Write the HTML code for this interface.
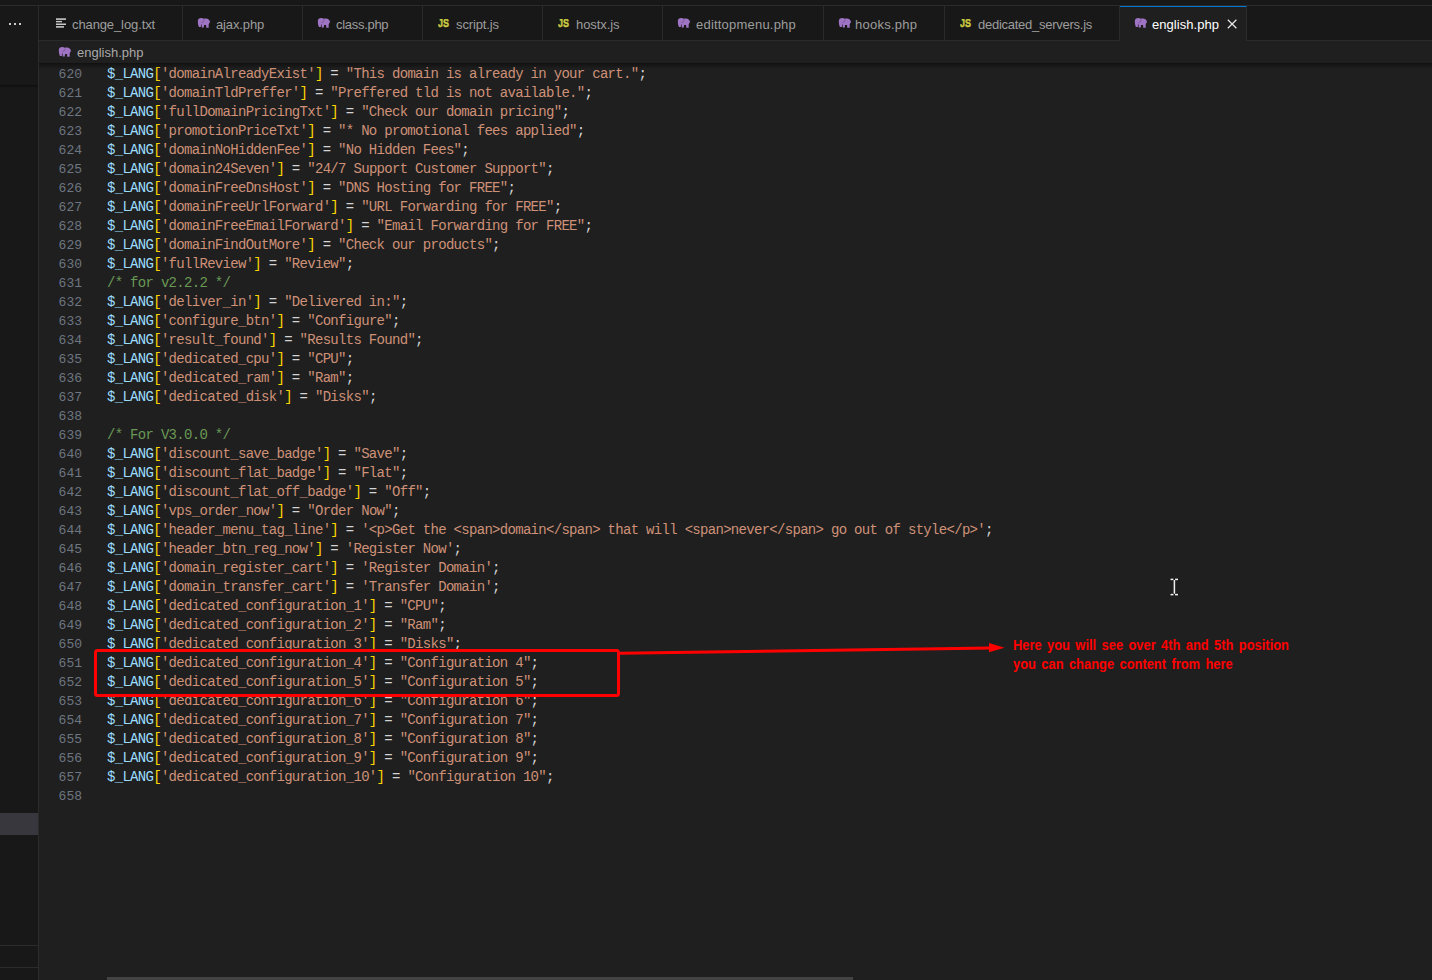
<!DOCTYPE html>
<html><head><meta charset="utf-8">
<style>
*{box-sizing:border-box;margin:0;padding:0}
html,body{width:1432px;height:980px;overflow:hidden;background:#1f1f1f}
body{position:relative;font-family:"Liberation Sans",sans-serif}
#title{position:absolute;left:0;top:0;width:1432px;height:6px;background:#181818;border-bottom:1px solid #2b2b2b}
#side{position:absolute;left:0;top:6px;width:39px;height:974px;background:#181818;border-right:1px solid #2b2b2b}
#side .d{position:absolute;top:17px;width:2px;height:2px;background:#cccccc}
#side .sh{position:absolute;left:0;top:79px;width:38px;height:3px;background:linear-gradient(#0e0e0e,#141414 60%,#181818)}
#side .sel{position:absolute;left:0;top:807px;width:38px;height:22px;background:#37373d}
#side .l1{position:absolute;left:0;top:939px;width:38px;height:1px;background:#2b2b2b}
#side .l2{position:absolute;left:0;top:961px;width:38px;height:1px;background:#2b2b2b}
#tabs{position:absolute;left:39px;top:6px;width:1393px;height:35px;background:#181818;border-bottom:1px solid #2b2b2b}
.tab{position:absolute;top:0;height:35px;border-right:1px solid #2b2b2b;color:#9d9d9d;font-size:13px;white-space:nowrap}
.tab .t{position:absolute;top:10px}
.tab.act{background:#1f1f1f;color:#ffffff;height:35px;border-top:1px solid #0078d4}
.ico{position:absolute}
#crumb{position:absolute;left:39px;top:41px;width:1393px;height:22px;background:#1f1f1f;color:#a9a9a9;font-size:13px}
#shadow{position:absolute;left:39px;top:63px;width:1393px;height:6px;background:linear-gradient(rgba(0,0,0,.45),rgba(0,0,0,0));z-index:5}
.ln{position:absolute;left:40px;width:42px;text-align:right;height:19px;line-height:19px;color:#6e7681;font-family:"Liberation Mono",monospace;font-size:13px;letter-spacing:0px;padding-top:2px;white-space:pre}
.cl{position:absolute;left:107px;height:19px;line-height:19px;color:#d4d4d4;font-family:"Liberation Mono",monospace;font-size:14px;letter-spacing:-0.7px;padding-top:2px;white-space:pre}
.v{color:#9cdcfe}.b{color:#ffd700}.s{color:#ce9178}.o{color:#d4d4d4}.c{color:#6a9955}
#hscroll{position:absolute;left:107px;top:977px;width:746px;height:3px;background:#434343}
#note{position:absolute;left:1013px;top:636px;color:#ff0000;font-weight:bold;font-size:14.5px;line-height:19px;white-space:nowrap;word-spacing:2px;transform:scaleX(0.89);transform-origin:0 0}
</style></head><body>
<div id="title"></div>
<div id="side"><div class="d" style="left:9px"></div><div class="d" style="left:14px"></div><div class="d" style="left:19px"></div><div class="sh"></div><div class="sel"></div><div class="l1"></div><div class="l2"></div></div>
<svg width="0" height="0" style="position:absolute"><defs>
<g id="eleph">
<path fill="#a074c4" d="M0.8,3.2 C0.8,1.2 2.2,0 4.3,0 C5.3,0 6,0.3 6.5,0.8 C7.2,0.6 8,0.6 9,0.6 C11.2,0.6 12.6,2 12.8,3.6 L13.3,4.1 L12.6,4.6 C12.3,5.3 11.9,5.8 11.7,6.2 L11.7,9.7 L9.2,9.7 L9.1,7 L7,7 L6.8,9.6 L4.7,9.6 L4.6,6.6 L3.9,6.6 L3.9,8.9 L1.9,8.9 C1.3,7.5 0.8,5.5 0.8,3.2 Z"/>
<path fill="none" stroke="#6f5190" stroke-width="0.9" d="M7.1,1.6 C7,3.2 6.5,4.2 4.6,4.5"/>
</g>
<g id="js"><text x="0" y="8" font-family="Liberation Sans" font-weight="bold" font-size="11" fill="#cbcb41" stroke="#cbcb41" stroke-width="0.45" textLength="11" lengthAdjust="spacingAndGlyphs">JS</text></g>
</defs></svg>
<div id="tabs">
 <div class="tab" style="left:0;width:144px"><svg class="ico" style="left:17px;top:12px" width="11" height="10"><rect x="0" y="0.3" width="10" height="1.6" fill="#c8c8c8"/><rect x="0" y="2.9" width="6" height="1.4" fill="#c8c8c8"/><rect x="0" y="5.5" width="10" height="1.5" fill="#c8c8c8"/><rect x="0" y="8.1" width="8" height="1.6" fill="#c8c8c8"/></svg><span class="t" style="left:33px;top:11px;letter-spacing:-0.11px">change_log.txt</span></div>
 <div class="tab" style="left:144px;width:120px"><svg class="ico" style="left:14px;top:12px" width="14" height="10"><use href="#eleph"/></svg><span class="t" style="left:33px;top:11px;letter-spacing:-0.13px">ajax.php</span></div>
 <div class="tab" style="left:264px;width:120px"><svg class="ico" style="left:14px;top:12px" width="14" height="10"><use href="#eleph"/></svg><span class="t" style="left:33px;top:11px;letter-spacing:-0.29px">class.php</span></div>
 <div class="tab" style="left:384px;width:120px"><svg class="ico" style="left:15px;top:13px" width="12" height="9"><use href="#js"/></svg><span class="t" style="left:33px;top:11px;letter-spacing:-0.12px">script.js</span></div>
 <div class="tab" style="left:504px;width:120px"><svg class="ico" style="left:15px;top:13px" width="12" height="9"><use href="#js"/></svg><span class="t" style="left:33px;top:11px;letter-spacing:-0.07px">hostx.js</span></div>
 <div class="tab" style="left:624px;width:161px"><svg class="ico" style="left:14px;top:12px" width="14" height="10"><use href="#eleph"/></svg><span class="t" style="left:33px;top:11px;letter-spacing:0.21px">edittopmenu.php</span></div>
 <div class="tab" style="left:785px;width:121px"><svg class="ico" style="left:14px;top:12px" width="14" height="10"><use href="#eleph"/></svg><span class="t" style="left:31px;top:11px;letter-spacing:0.25px">hooks.php</span></div>
 <div class="tab" style="left:906px;width:175px"><svg class="ico" style="left:15px;top:13px" width="12" height="9"><use href="#js"/></svg><span class="t" style="left:33px;top:11px;letter-spacing:-0.26px">dedicated_servers.js</span></div>
 <div class="tab act" style="left:1081px;width:127px"><svg class="ico" style="left:14px;top:11px" width="14" height="10"><use href="#eleph"/></svg><span class="t" style="left:32px;top:10px;letter-spacing:0.06px">english.php</span><svg class="ico" style="left:107px;top:12px" width="11" height="10"><path d="M0.8,0.8 L9.4,9.2 M9.4,0.8 L0.8,9.2" stroke="#e8e8e8" stroke-width="1.2" fill="none"/></svg></div>
</div>
<div id="crumb"><svg class="ico" style="left:19px;top:6px" width="14" height="10"><use href="#eleph"/></svg><span style="position:absolute;left:38px;top:4px">english.php</span></div>
<div id="shadow"></div>
<div class=ln style="top:63px">620</div><div class=cl style="top:63px"><span class=v>$_LANG</span><span class=b>[</span><span class=s>&#x27;domainAlreadyExist&#x27;</span><span class=b>]</span><span class=o> = </span><span class=s>&quot;This domain is already in your cart.&quot;</span><span class=o>;</span></div>
<div class=ln style="top:82px">621</div><div class=cl style="top:82px"><span class=v>$_LANG</span><span class=b>[</span><span class=s>&#x27;domainTldPreffer&#x27;</span><span class=b>]</span><span class=o> = </span><span class=s>&quot;Preffered tld is not available.&quot;</span><span class=o>;</span></div>
<div class=ln style="top:101px">622</div><div class=cl style="top:101px"><span class=v>$_LANG</span><span class=b>[</span><span class=s>&#x27;fullDomainPricingTxt&#x27;</span><span class=b>]</span><span class=o> = </span><span class=s>&quot;Check our domain pricing&quot;</span><span class=o>;</span></div>
<div class=ln style="top:120px">623</div><div class=cl style="top:120px"><span class=v>$_LANG</span><span class=b>[</span><span class=s>&#x27;promotionPriceTxt&#x27;</span><span class=b>]</span><span class=o> = </span><span class=s>&quot;* No promotional fees applied&quot;</span><span class=o>;</span></div>
<div class=ln style="top:139px">624</div><div class=cl style="top:139px"><span class=v>$_LANG</span><span class=b>[</span><span class=s>&#x27;domainNoHiddenFee&#x27;</span><span class=b>]</span><span class=o> = </span><span class=s>&quot;No Hidden Fees&quot;</span><span class=o>;</span></div>
<div class=ln style="top:158px">625</div><div class=cl style="top:158px"><span class=v>$_LANG</span><span class=b>[</span><span class=s>&#x27;domain24Seven&#x27;</span><span class=b>]</span><span class=o> = </span><span class=s>&quot;24/7 Support Customer Support&quot;</span><span class=o>;</span></div>
<div class=ln style="top:177px">626</div><div class=cl style="top:177px"><span class=v>$_LANG</span><span class=b>[</span><span class=s>&#x27;domainFreeDnsHost&#x27;</span><span class=b>]</span><span class=o> = </span><span class=s>&quot;DNS Hosting for FREE&quot;</span><span class=o>;</span></div>
<div class=ln style="top:196px">627</div><div class=cl style="top:196px"><span class=v>$_LANG</span><span class=b>[</span><span class=s>&#x27;domainFreeUrlForward&#x27;</span><span class=b>]</span><span class=o> = </span><span class=s>&quot;URL Forwarding for FREE&quot;</span><span class=o>;</span></div>
<div class=ln style="top:215px">628</div><div class=cl style="top:215px"><span class=v>$_LANG</span><span class=b>[</span><span class=s>&#x27;domainFreeEmailForward&#x27;</span><span class=b>]</span><span class=o> = </span><span class=s>&quot;Email Forwarding for FREE&quot;</span><span class=o>;</span></div>
<div class=ln style="top:234px">629</div><div class=cl style="top:234px"><span class=v>$_LANG</span><span class=b>[</span><span class=s>&#x27;domainFindOutMore&#x27;</span><span class=b>]</span><span class=o> = </span><span class=s>&quot;Check our products&quot;</span><span class=o>;</span></div>
<div class=ln style="top:253px">630</div><div class=cl style="top:253px"><span class=v>$_LANG</span><span class=b>[</span><span class=s>&#x27;fullReview&#x27;</span><span class=b>]</span><span class=o> = </span><span class=s>&quot;Review&quot;</span><span class=o>;</span></div>
<div class=ln style="top:272px">631</div><div class=cl style="top:272px"><span class=c>/* for v2.2.2 */</span></div>
<div class=ln style="top:291px">632</div><div class=cl style="top:291px"><span class=v>$_LANG</span><span class=b>[</span><span class=s>&#x27;deliver_in&#x27;</span><span class=b>]</span><span class=o> = </span><span class=s>&quot;Delivered in:&quot;</span><span class=o>;</span></div>
<div class=ln style="top:310px">633</div><div class=cl style="top:310px"><span class=v>$_LANG</span><span class=b>[</span><span class=s>&#x27;configure_btn&#x27;</span><span class=b>]</span><span class=o> = </span><span class=s>&quot;Configure&quot;</span><span class=o>;</span></div>
<div class=ln style="top:329px">634</div><div class=cl style="top:329px"><span class=v>$_LANG</span><span class=b>[</span><span class=s>&#x27;result_found&#x27;</span><span class=b>]</span><span class=o> = </span><span class=s>&quot;Results Found&quot;</span><span class=o>;</span></div>
<div class=ln style="top:348px">635</div><div class=cl style="top:348px"><span class=v>$_LANG</span><span class=b>[</span><span class=s>&#x27;dedicated_cpu&#x27;</span><span class=b>]</span><span class=o> = </span><span class=s>&quot;CPU&quot;</span><span class=o>;</span></div>
<div class=ln style="top:367px">636</div><div class=cl style="top:367px"><span class=v>$_LANG</span><span class=b>[</span><span class=s>&#x27;dedicated_ram&#x27;</span><span class=b>]</span><span class=o> = </span><span class=s>&quot;Ram&quot;</span><span class=o>;</span></div>
<div class=ln style="top:386px">637</div><div class=cl style="top:386px"><span class=v>$_LANG</span><span class=b>[</span><span class=s>&#x27;dedicated_disk&#x27;</span><span class=b>]</span><span class=o> = </span><span class=s>&quot;Disks&quot;</span><span class=o>;</span></div>
<div class=ln style="top:405px">638</div><div class=cl style="top:405px"></div>
<div class=ln style="top:424px">639</div><div class=cl style="top:424px"><span class=c>/* For V3.0.0 */</span></div>
<div class=ln style="top:443px">640</div><div class=cl style="top:443px"><span class=v>$_LANG</span><span class=b>[</span><span class=s>&#x27;discount_save_badge&#x27;</span><span class=b>]</span><span class=o> = </span><span class=s>&quot;Save&quot;</span><span class=o>;</span></div>
<div class=ln style="top:462px">641</div><div class=cl style="top:462px"><span class=v>$_LANG</span><span class=b>[</span><span class=s>&#x27;discount_flat_badge&#x27;</span><span class=b>]</span><span class=o> = </span><span class=s>&quot;Flat&quot;</span><span class=o>;</span></div>
<div class=ln style="top:481px">642</div><div class=cl style="top:481px"><span class=v>$_LANG</span><span class=b>[</span><span class=s>&#x27;discount_flat_off_badge&#x27;</span><span class=b>]</span><span class=o> = </span><span class=s>&quot;Off&quot;</span><span class=o>;</span></div>
<div class=ln style="top:500px">643</div><div class=cl style="top:500px"><span class=v>$_LANG</span><span class=b>[</span><span class=s>&#x27;vps_order_now&#x27;</span><span class=b>]</span><span class=o> = </span><span class=s>&quot;Order Now&quot;</span><span class=o>;</span></div>
<div class=ln style="top:519px">644</div><div class=cl style="top:519px"><span class=v>$_LANG</span><span class=b>[</span><span class=s>&#x27;header_menu_tag_line&#x27;</span><span class=b>]</span><span class=o> = </span><span class=s>&#x27;&lt;p&gt;Get the &lt;span&gt;domain&lt;/span&gt; that will &lt;span&gt;never&lt;/span&gt; go out of style&lt;/p&gt;&#x27;</span><span class=o>;</span></div>
<div class=ln style="top:538px">645</div><div class=cl style="top:538px"><span class=v>$_LANG</span><span class=b>[</span><span class=s>&#x27;header_btn_reg_now&#x27;</span><span class=b>]</span><span class=o> = </span><span class=s>&#x27;Register Now&#x27;</span><span class=o>;</span></div>
<div class=ln style="top:557px">646</div><div class=cl style="top:557px"><span class=v>$_LANG</span><span class=b>[</span><span class=s>&#x27;domain_register_cart&#x27;</span><span class=b>]</span><span class=o> = </span><span class=s>&#x27;Register Domain&#x27;</span><span class=o>;</span></div>
<div class=ln style="top:576px">647</div><div class=cl style="top:576px"><span class=v>$_LANG</span><span class=b>[</span><span class=s>&#x27;domain_transfer_cart&#x27;</span><span class=b>]</span><span class=o> = </span><span class=s>&#x27;Transfer Domain&#x27;</span><span class=o>;</span></div>
<div class=ln style="top:595px">648</div><div class=cl style="top:595px"><span class=v>$_LANG</span><span class=b>[</span><span class=s>&#x27;dedicated_configuration_1&#x27;</span><span class=b>]</span><span class=o> = </span><span class=s>&quot;CPU&quot;</span><span class=o>;</span></div>
<div class=ln style="top:614px">649</div><div class=cl style="top:614px"><span class=v>$_LANG</span><span class=b>[</span><span class=s>&#x27;dedicated_configuration_2&#x27;</span><span class=b>]</span><span class=o> = </span><span class=s>&quot;Ram&quot;</span><span class=o>;</span></div>
<div class=ln style="top:633px">650</div><div class=cl style="top:633px"><span class=v>$_LANG</span><span class=b>[</span><span class=s>&#x27;dedicated_configuration_3&#x27;</span><span class=b>]</span><span class=o> = </span><span class=s>&quot;Disks&quot;</span><span class=o>;</span></div>
<div class=ln style="top:652px">651</div><div class=cl style="top:652px"><span class=v>$_LANG</span><span class=b>[</span><span class=s>&#x27;dedicated_configuration_4&#x27;</span><span class=b>]</span><span class=o> = </span><span class=s>&quot;Configuration 4&quot;</span><span class=o>;</span></div>
<div class=ln style="top:671px">652</div><div class=cl style="top:671px"><span class=v>$_LANG</span><span class=b>[</span><span class=s>&#x27;dedicated_configuration_5&#x27;</span><span class=b>]</span><span class=o> = </span><span class=s>&quot;Configuration 5&quot;</span><span class=o>;</span></div>
<div class=ln style="top:690px">653</div><div class=cl style="top:690px"><span class=v>$_LANG</span><span class=b>[</span><span class=s>&#x27;dedicated_configuration_6&#x27;</span><span class=b>]</span><span class=o> = </span><span class=s>&quot;Configuration 6&quot;</span><span class=o>;</span></div>
<div class=ln style="top:709px">654</div><div class=cl style="top:709px"><span class=v>$_LANG</span><span class=b>[</span><span class=s>&#x27;dedicated_configuration_7&#x27;</span><span class=b>]</span><span class=o> = </span><span class=s>&quot;Configuration 7&quot;</span><span class=o>;</span></div>
<div class=ln style="top:728px">655</div><div class=cl style="top:728px"><span class=v>$_LANG</span><span class=b>[</span><span class=s>&#x27;dedicated_configuration_8&#x27;</span><span class=b>]</span><span class=o> = </span><span class=s>&quot;Configuration 8&quot;</span><span class=o>;</span></div>
<div class=ln style="top:747px">656</div><div class=cl style="top:747px"><span class=v>$_LANG</span><span class=b>[</span><span class=s>&#x27;dedicated_configuration_9&#x27;</span><span class=b>]</span><span class=o> = </span><span class=s>&quot;Configuration 9&quot;</span><span class=o>;</span></div>
<div class=ln style="top:766px">657</div><div class=cl style="top:766px"><span class=v>$_LANG</span><span class=b>[</span><span class=s>&#x27;dedicated_configuration_10&#x27;</span><span class=b>]</span><span class=o> = </span><span class=s>&quot;Configuration 10&quot;</span><span class=o>;</span></div>
<div class=ln style="top:785px">658</div><div class=cl style="top:785px"></div><div id="hscroll"></div>
<svg style="position:absolute;left:0;top:0;z-index:10" width="1432" height="980">
 <rect x="95.5" y="650.5" width="523" height="45" rx="2" fill="none" stroke="#ff0000" stroke-width="3"/>
 <line x1="620" y1="653.3" x2="992" y2="648" stroke="#ff0000" stroke-width="3"/>
 <polygon points="989,643 1004.5,647.7 989,652.3" fill="#ff0000"/>
 <g fill="#f0f0f0" stroke="#000" stroke-width="0.4" paint-order="stroke"><rect x="1170.5" y="578.6" width="3" height="1.6"/><rect x="1175" y="578.6" width="3" height="1.6"/><rect x="1173.6" y="580" width="1.6" height="14"/><rect x="1170.5" y="593.8" width="3" height="1.6"/><rect x="1175" y="593.8" width="3" height="1.6"/></g>
</svg>
<div id="note">Here you will see over 4th and 5th position<br>you can change content from here</div>
</body></html>
